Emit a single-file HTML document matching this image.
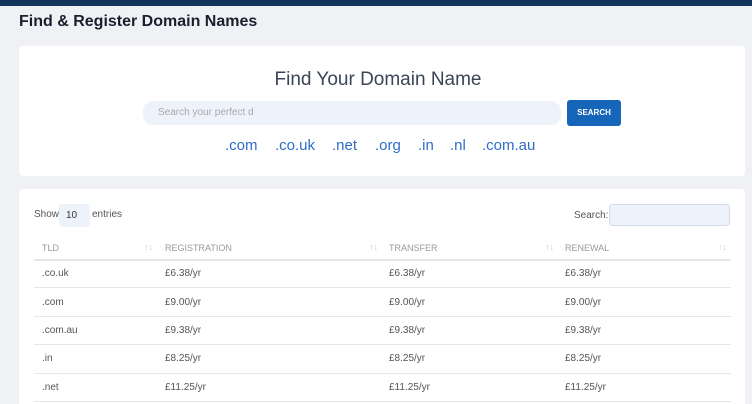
<!DOCTYPE html>
<html><head><style>
*{margin:0;padding:0;box-sizing:border-box}
html,body{width:752px;height:404px;overflow:hidden}
body{background:#f0f1f5;font-family:"Liberation Sans",sans-serif;position:relative}
.top{position:absolute;left:0;top:0;width:752px;height:6px;background:#15365c}
h1{position:absolute;left:19px;top:13px;font-size:16px;font-weight:bold;color:#1a1f2e}
.card{position:absolute;left:19px;width:726px;background:#fff;border-radius:4px}
.t{position:absolute;font-size:10px;color:#555}
.h{position:absolute;font-size:9px;color:#999;top:243px}
.line{position:absolute;left:34px;width:697px;height:1px;background:#e6e6ea}
.s{position:absolute;font-size:9px;color:#ccc;top:242px}
.d{position:absolute;top:137px;font-size:15px;color:#2f6ec6}
</style></head><body>
<div class="top"></div>
<h1>Find &amp; Register Domain Names</h1>
<div class="card" style="top:46px;height:130px"></div>
<div style="position:absolute;left:2px;width:752px;top:69px;text-align:center;font-size:19px;color:#3a4556">Find Your Domain Name</div>
<div style="position:absolute;left:143px;top:101px;width:418px;height:24px;background:#eef2fa;border-radius:10px;font-size:10px;color:#aaa;padding:6px 15px">Search your perfect d</div>
<div style="position:absolute;left:567px;top:100px;width:54px;height:26px;background:#1565b8;border-radius:3px;color:#fff;font-size:8px;font-weight:bold;text-align:center;line-height:26px">SEARCH</div>
<div class="d" style="left:225px">.com</div>
<div class="d" style="left:275px">.co.uk</div>
<div class="d" style="left:332px">.net</div>
<div class="d" style="left:375px">.org</div>
<div class="d" style="left:418px">.in</div>
<div class="d" style="left:450px">.nl</div>
<div class="d" style="left:482px">.com.au</div>
<div class="card" style="top:189px;height:230px"></div>
<div class="t" style="left:34px;top:209px">Show</div>
<div style="position:absolute;left:59px;top:204px;width:31px;height:23px;background:#eef2fa;border-radius:3px;font-size:10px;color:#333;padding:6px 7px">10</div>
<div class="t" style="left:92px;top:209px">entries</div>
<div class="t" style="left:574px;top:210px">Search:</div>
<div style="position:absolute;left:609px;top:204px;width:121px;height:22px;background:#eef2fa;border:1px solid #d5dbe8;border-radius:3px"></div>
<div class="h" style="left:42px">TLD</div><div class="s" style="left:144px">↑↓</div>
<div class="h" style="left:165px">REGISTRATION</div><div class="s" style="left:369px">↑↓</div>
<div class="h" style="left:389px">TRANSFER</div><div class="s" style="left:545px">↑↓</div>
<div class="h" style="left:565px">RENEWAL</div><div class="s" style="left:718px">↑↓</div>
<div class="line" style="top:259px;height:2px"></div>
<div class="t" style="left:42px;top:268px">.co.uk</div><div class="t" style="left:165px;top:268px">£6.38/yr</div><div class="t" style="left:389px;top:268px">£6.38/yr</div><div class="t" style="left:565px;top:268px">£6.38/yr</div>
<div class="line" style="top:287px"></div>
<div class="t" style="left:42px;top:297px">.com</div><div class="t" style="left:165px;top:297px">£9.00/yr</div><div class="t" style="left:389px;top:297px">£9.00/yr</div><div class="t" style="left:565px;top:297px">£9.00/yr</div>
<div class="line" style="top:316px"></div>
<div class="t" style="left:42px;top:325px">.com.au</div><div class="t" style="left:165px;top:325px">£9.38/yr</div><div class="t" style="left:389px;top:325px">£9.38/yr</div><div class="t" style="left:565px;top:325px">£9.38/yr</div>
<div class="line" style="top:344px"></div>
<div class="t" style="left:42px;top:353px">.in</div><div class="t" style="left:165px;top:353px">£8.25/yr</div><div class="t" style="left:389px;top:353px">£8.25/yr</div><div class="t" style="left:565px;top:353px">£8.25/yr</div>
<div class="line" style="top:373px"></div>
<div class="t" style="left:42px;top:382px">.net</div><div class="t" style="left:165px;top:382px">£11.25/yr</div><div class="t" style="left:389px;top:382px">£11.25/yr</div><div class="t" style="left:565px;top:382px">£11.25/yr</div>
<div class="line" style="top:401px"></div>
</body></html>
